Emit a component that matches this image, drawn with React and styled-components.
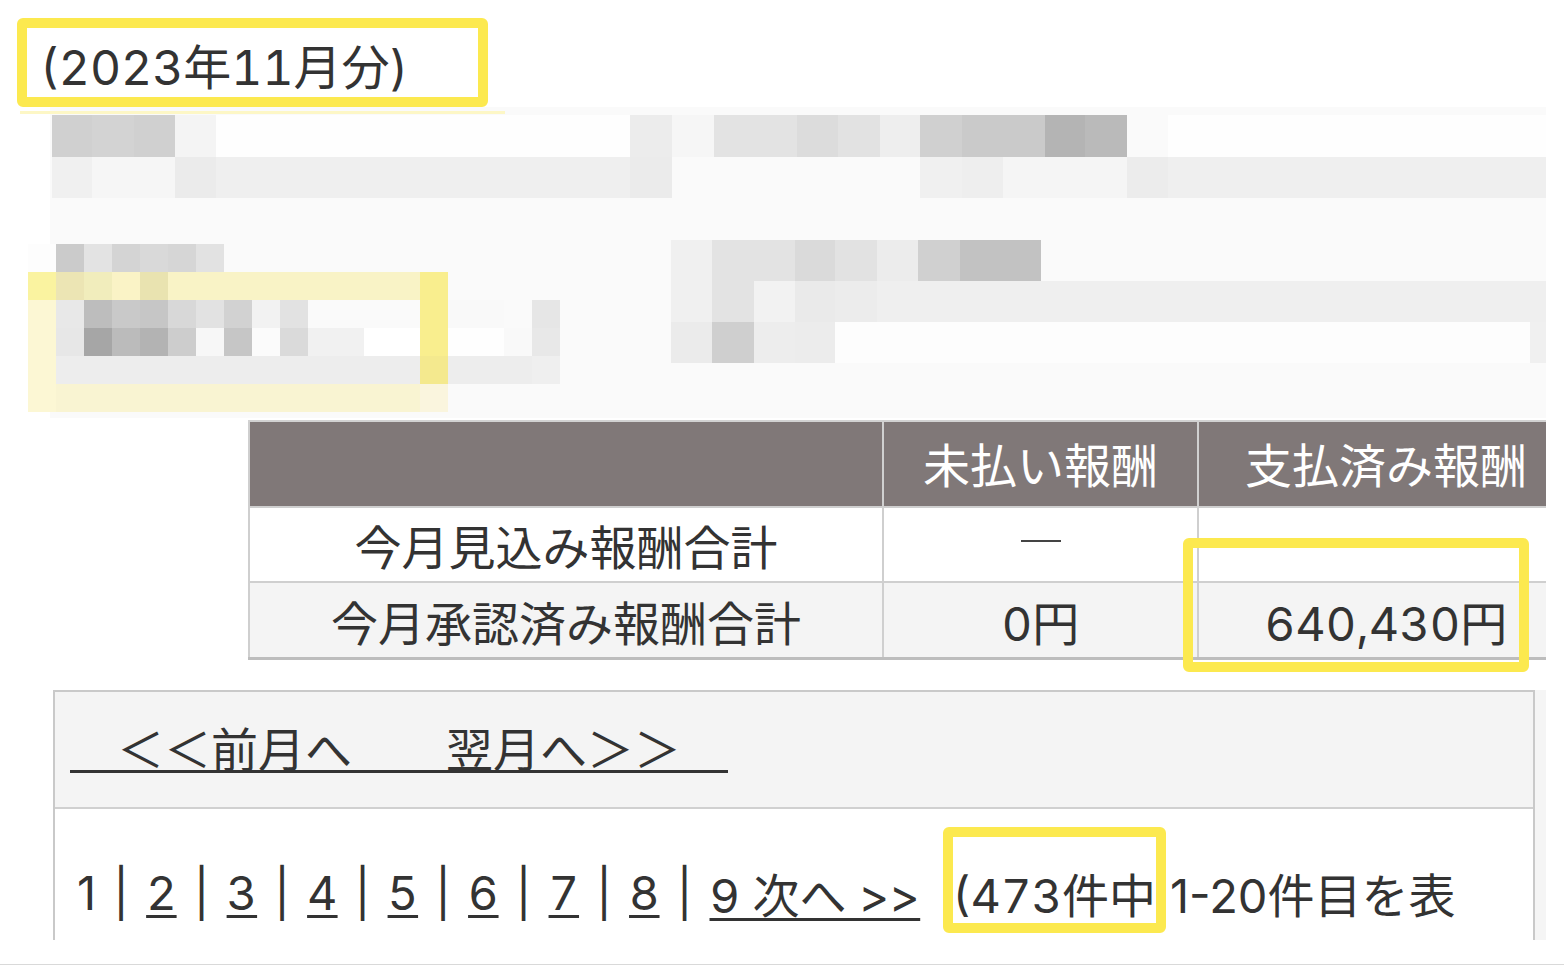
import styled, { createGlobalStyle } from "styled-components";

const GlobalStyle = createGlobalStyle`
  body {
    margin: 0;
    background: #ffffff;
    font-family: "Inter", "Noto Sans CJK JP", sans-serif;
    font-variant-numeric: tabular-nums;
    color: #333333;
  }
`;

const Page = styled.div`
  width: 1564px;
  height: 972px;
  overflow: hidden;
`;

const Screen = styled.div`
  width: 1546px;
  height: 940px;
  overflow: hidden;
`;

const BottomEdge = styled.div`
  margin-top: 24px;
  border-top: 1px solid #d9d9d9;
`;

const MonthBox = styled.div`
  margin: 18px 0 0 17px;
  width: 471px;
  height: 89px;
  box-sizing: border-box;
  border: 10px solid #fce94f;
  border-radius: 6px;
  padding: 7px 0 0 13px;
  font-size: 48px;
  line-height: 65px;
  white-space: nowrap;
`;

const Panel = styled.div`
  margin-left: 50px;
  width: 1496px;
  height: 311px;
  box-sizing: border-box;
  padding-top: 4px;
  background: #fafafa;
`;

const Glow = styled.div`
  margin-left: -30px;
  width: 485px;
  height: 3px;
  background: #fdf7c6;
`;

const TopMosaic = styled.div`
  margin: 1px 0 0 2px;
  height: 125px;
`;

const LowerRow = styled.div`
  display: flex;
  align-items: flex-start;
  margin-left: -22px;
`;

const LeftMosaic = styled.div`
  margin-top: 4px;
  width: 532px;
`;

const RightMosaic = styled.div`
  margin-left: 111px;
  width: 875px;
`;

const MosaicRow = styled.div`
  display: flex;
  height: ${(p) => p.$h}px;
`;

const Block = styled.div.attrs((p) => ({
  style: { width: `${p.$w}px`, background: p.$c },
}))`
  flex-shrink: 0;
  height: 100%;
`;

const TableArea = styled.div`
  position: relative;
  margin: 2px 0 0 248px;
  width: 1298px;
`;

const TableClip = styled.div`
  width: 1298px;
  overflow: hidden;
`;

const Table = styled.table`
  width: 1325px;
  table-layout: fixed;
  border-collapse: collapse;
  font-size: 47px;
  border-top: 2px solid #d2d2d2;
  border-left: 2px solid #cfcfcf;
  border-bottom: 3px solid #bdbdbd;
`;

const Th = styled.th`
  height: 81px;
  padding: 0 0 3px;
  background: #807878;
  color: #ffffff;
  font-weight: 400;
  border-right: 2px solid #d0d0d0;
`;

const Tr = styled.tr`
  background: ${(p) => (p.$alt ? "#f4f4f4" : "#ffffff")};
`;

const Td = styled.td`
  height: ${(p) => p.$h}px;
  padding: 0;
  text-align: center;
  border-top: 2px solid #cfcfcf;
  border-right: 2px solid #cfcfcf;
`;

const Dash = styled.span`
  display: inline-block;
  width: 40px;
  height: 2px;
  background: #444;
  vertical-align: middle;
  margin-bottom: 16px;
`;

const Highlight = styled.div`
  position: absolute;
  left: ${(p) => p.$x}px;
  top: ${(p) => p.$y}px;
  width: ${(p) => p.$w}px;
  height: ${(p) => p.$h}px;
  box-sizing: border-box;
  border: 10px solid #fce94f;
  border-radius: 6px;
  pointer-events: none;
`;

const NavWrap = styled.div`
  margin: 30px 0 0 53px;
  padding-right: 11px;
  background: #f5f5f5;
`;

const NavBox = styled.div`
  border: 2px solid #c9c9c9;
  background: #ffffff;
`;

const MonthNav = styled.div`
  height: 117px;
  box-sizing: border-box;
  display: flex;
  align-items: center;
  padding: 0 0 6px 15px;
  background: #f4f4f4;
  border-bottom: 2px solid #d0d0d0;
  font-size: 47px;
`;

const NavLink = styled.a`
  color: #333333;
  text-decoration: underline;
  text-decoration-thickness: 3px;
  text-underline-offset: 3px;
  white-space: pre;
`;

const Pager = styled.div`
  height: 166px;
  display: flex;
  align-items: center;
  padding-left: 22px;
  font-size: 47px;
  white-space: nowrap;
`;

const Current = styled.span`
  font-variant-numeric: proportional-nums;
`;

const PageLink = styled.a`
  color: #333333;
  text-decoration: underline;
  text-decoration-thickness: 3px;
  text-underline-offset: 5px;
`;

const Sep = styled.span`
  display: inline-block;
  width: 50px;
  text-align: center;
`;

const Count = styled.span`
  position: relative;
  margin-left: 32px;
`;

const CountMark = styled.span`
  position: absolute;
  left: -9px;
  top: -31px;
  width: 223px;
  height: 106px;
  box-sizing: border-box;
  border: 10px solid #fce94f;
  border-radius: 6px;
`;

const Range = styled.span`
  margin-left: 14px;
  font-variant-numeric: proportional-nums;
`;

const toBlocks = (stops, end) =>
  stops.map(([x, c], i) => ({ w: (i + 1 < stops.length ? stops[i + 1][0] : end) - x, c }));

const grid = (cells) => cells.map((c) => ({ w: 28, c }));

const rep = (c, n) => Array(n).fill(c);

const topRows = [
  {
    h: 42,
    blocks: toBlocks(
      [
        [52, "#d0d0d0"], [92, "#d3d3d3"], [134, "#d0d0d0"], [175, "#f4f4f4"], [216, "#fefefe"],
        [630, "#ececec"], [672, "#f6f6f6"], [714, "#e3e3e3"], [797, "#dcdcdc"], [838, "#e2e2e2"],
        [880, "#eeeeee"], [920, "#d0d0d0"], [962, "#cacaca"], [1045, "#b4b4b4"], [1085, "#bababa"],
        [1127, "#fafafa"], [1168, "#fefefe"],
      ],
      1546
    ),
  },
  {
    h: 41,
    blocks: toBlocks(
      [
        [52, "#f0f0f0"], [92, "#f6f6f6"], [175, "#ebebeb"], [216, "#efefef"], [630, "#ebebeb"],
        [672, "#fafafa"], [920, "#f0f0f0"], [962, "#eeeeee"], [1003, "#f5f5f5"], [1127, "#ececec"],
        [1168, "#efefef"],
      ],
      1546
    ),
  },
];

const leftRows = [
  ["#fdfdfd", "#cbcbcb", "#e3e3e3", "#d4d4d4", "#d9d9d9", "#d6d6d6", "#e2e2e2", ...rep("#fafafa", 12)],
  ["#faf3a0", "#ece5b4", "#f1edbc", "#faf3c6", "#e9e3b0", ...rep("#f9f3c6", 9), "#f9ee8e", ...rep("#fafafa", 4)],
  [
    "#fcf7d4", "#e8e8e8", "#bdbdbd", "#c9c9c9", "#c6c6c6", "#d8d8d8", "#e2e2e2", "#d2d2d2", "#f2f2f2",
    "#e2e2e2", ...rep("#fafafa", 4), "#f9ee8e", "#f9f9f9", "#f9f9f9", "#fafafa", "#e6e6e6",
  ],
  [
    "#fcf7d4", "#e7e7e7", "#a6a6a6", "#bbbbbb", "#b3b3b3", "#cdcdcd", "#f7f7f7", "#c6c6c6", "#fbfbfb",
    "#dadada", "#f1f1f1", "#f1f1f1", "#ffffff", "#ffffff", "#f9ee8e", "#fefefe", "#fefefe", "#f9f9f9", "#e8e8e8",
  ],
  ["#fcf7d4", ...rep("#ededed", 13), "#f4e98e", ...rep("#ededed", 3), "#efefef"],
  ["#fcf7d4", ...rep("#f9f4d2", 13), "#faf5de", ...rep("#fafafa", 4)],
];

const rightRows = [
  [[671, "#f0f0f0"], [712, "#e3e3e3"], [795, "#dadada"], [835, "#e2e2e2"], [877, "#ececec"], [918, "#d0d0d0"], [960, "#c2c2c2"], [1041, "#fafafa"]],
  [[671, "#f0f0f0"], [712, "#e3e3e3"], [754, "#f2f2f2"], [795, "#eaeaea"], [835, "#ececec"], [877, "#efefef"]],
  [[671, "#ebebeb"], [712, "#cfcfcf"], [754, "#ededed"], [795, "#ececec"], [835, "#fdfdfd"], [1530, "#f0f0f0"]],
];

const Mosaic = ({ rows }) =>
  rows.map((row, i) => (
    <MosaicRow key={i} $h={row.h}>
      {row.blocks.map((b, j) => (
        <Block key={j} $w={b.w} $c={b.c} />
      ))}
    </MosaicRow>
  ));

const pages = ["2", "3", "4", "5", "6", "7", "8"];

const App = () => {
  return (
    <Page>
      <GlobalStyle />
      <Screen>
        <MonthBox>(2023年11月分)</MonthBox>
        <Panel>
          <Glow />
          <TopMosaic>
            <Mosaic rows={topRows} />
          </TopMosaic>
          <LowerRow>
            <LeftMosaic>
              <Mosaic rows={leftRows.map((r) => ({ h: 28, blocks: grid(r) }))} />
            </LeftMosaic>
            <RightMosaic>
              <Mosaic rows={rightRows.map((r) => ({ h: 41, blocks: toBlocks(r, 1546) }))} />
            </RightMosaic>
          </LowerRow>
        </Panel>

        <TableArea>
          <TableClip>
            <Table>
              <colgroup>
                <col style={{ width: 634 }} />
                <col style={{ width: 315 }} />
                <col style={{ width: 376 }} />
              </colgroup>
              <thead>
                <tr>
                  <Th />
                  <Th>未払い報酬</Th>
                  <Th>支払済み報酬</Th>
                </tr>
              </thead>
              <tbody>
                <Tr>
                  <Td $h={73}>今月見込み報酬合計</Td>
                  <Td $h={73}>
                    <Dash />
                  </Td>
                  <Td $h={73} />
                </Tr>
                <Tr $alt>
                  <Td $h={74}>今月承認済み報酬合計</Td>
                  <Td $h={74}>0円</Td>
                  <Td $h={74}>640,430円</Td>
                </Tr>
              </tbody>
            </Table>
          </TableClip>
          <Highlight $x={935} $y={118} $w={346} $h={134} />
        </TableArea>

        <NavWrap>
          <NavBox>
            <MonthNav>
              <NavLink>{"　＜＜前月へ　　翌月へ＞＞　"}</NavLink>
            </MonthNav>
            <Pager>
              <Current>1</Current>
              {pages.map((p) => (
                <span key={p}>
                  <Sep>|</Sep>
                  <PageLink>{p}</PageLink>
                </span>
              ))}
              <Sep>|</Sep>
              <PageLink>9 次へ &gt;&gt;</PageLink>
              <Count>
                <CountMark />
                (473件中
              </Count>
              <Range>1-20件目を表</Range>
            </Pager>
          </NavBox>
        </NavWrap>
      </Screen>
      <BottomEdge />
    </Page>
  );
};

export default App;
